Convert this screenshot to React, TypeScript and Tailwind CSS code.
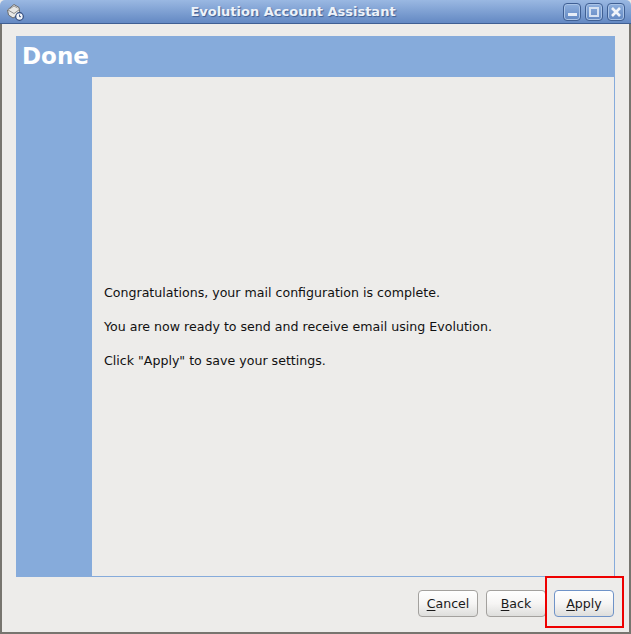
import React from 'react';

const WindowButton = ({ children }: { children: React.ReactNode }) => (
  <div className="w-[18px] h-[18px] rounded-[4px] border border-[#3f5f93] bg-gradient-to-b from-[#8fb0de] to-[#6288c2] shadow-[inset_0_0_0_1px_#a9c3e6] flex items-center justify-center">
    {children}
  </div>
);

const MailIcon = () => (
  <svg width="18" height="18" viewBox="0 0 18 18" className="shrink-0">
    <path d="M1.5 7 L8 1.5 L13 4.5 L14 11 L7 15 L2.5 12 Z" fill="#e8e8e6" stroke="#6b6b6b" strokeWidth="1" />
    <path d="M2 7 L8 10.5 L13.5 6.5" fill="none" stroke="#8a8a8a" strokeWidth="1" />
    <path d="M3.5 6 L8 3 L11.5 5" fill="none" stroke="#9a9a9a" strokeWidth="1" />
    <circle cx="13.5" cy="13.5" r="3.8" fill="#f2f4f8" stroke="#2f4a7d" strokeWidth="1.2" />
    <path d="M13.5 11.5 V13.7 H15" fill="none" stroke="#2f4a7d" strokeWidth="0.9" />
  </svg>
);

const DialogButton = ({ label, rest, focused }: { label: string; rest: string; focused?: boolean }) => (
  <button
    className={`w-[60px] h-[27px] pt-[1px] rounded-[4px] border bg-gradient-to-b from-[#ffffff] via-[#f6f5f4] to-[#dededc] text-[12.6px] text-[#1a1a1a] flex items-center justify-center ${focused ? 'border-[#6f93c8]' : 'border-[#a3a19e]'}`}
  >
    <span>
      <span className="underline underline-offset-2">{label}</span>
      {rest}
    </span>
  </button>
);

export default function App() {
  return (
    <div className="relative w-[631px] h-[634px] flex flex-col bg-[#edecea] overflow-hidden font-['DejaVu_Sans',sans-serif]">
      <div className="h-[24px] shrink-0 rounded-t-[5px] bg-gradient-to-b from-[#9ab8e2] to-[#6489c3] border-b border-[#3f5f93] flex items-center pl-[6px] pr-[6px]">
        <MailIcon />
        <div className="flex-1 text-center text-[13px] font-bold tracking-[0px] mt-[1px] text-[#edf2f9] [text-shadow:1px_1px_1px_#3f5f93] pr-[1px]">
          Evolution Account Assistant
        </div>
        <div className="flex gap-[4px]">
          <WindowButton>
            <div className="w-[9px] h-[3px] mt-[5px] bg-[#e6edf7]" />
          </WindowButton>
          <WindowButton>
            <div className="w-[10px] h-[10px] border-2 border-[#d5e1f1]" />
          </WindowButton>
          <WindowButton>
            <svg width="12" height="12" viewBox="0 0 12 12">
              <path d="M2 2 L10 10 M10 2 L2 10" stroke="#f0f4fa" strokeWidth="2.6" />
            </svg>
          </WindowButton>
        </div>
      </div>

      <div className="flex-1 flex flex-col border-x-2 border-b-2 border-x-[#77756f] border-b-[#77756f] pl-[14px] pr-[14px] pt-[12px]">
        <div className="w-[599px] h-[541px] flex flex-col bg-[#86abdb]">
          <div className="h-[41px] shrink-0 pl-[6px] flex items-center">
            <span className="text-[23px] leading-none font-bold text-white">Done</span>
          </div>
          <div className="flex-1 ml-[76px] mr-[1px] mb-[1px] bg-[#edecea] flex flex-col justify-center gap-[17px] pl-[12px] text-[12.6px] leading-[17px] text-[#111111]">
            <p>Congratulations, your mail configuration is complete.</p>
            <p>You are now ready to send and receive email using Evolution.</p>
            <p>Click "Apply" to save your settings.</p>
          </div>
        </div>
        <div className="w-[598px] flex justify-end gap-[8px] mt-[13px]">
          <DialogButton label="C" rest="ancel" />
          <DialogButton label="B" rest="ack" />
          <DialogButton label="A" rest="pply" focused />
        </div>
      </div>

      <div className="absolute left-[545px] top-[576px] w-[79px] h-[52px] border-2 border-[#ee0000]" />
    </div>
  );
}
